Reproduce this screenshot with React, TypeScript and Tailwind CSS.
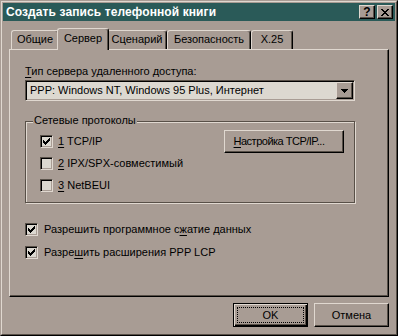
import React from 'react';

const CHECK = 'M0 2h1v3H0z M1 3h1v3H1z M2 4h1v3H2z M3 3h1v3H3z M4 2h1v3H4z M5 1h1v3H5z M6 0h1v3H6z';
const CLOSE =
  'M0 0h2v1H0z M6 0h2v1H6z M1 1h2v1H1z M5 1h2v1H5z M2 2h4v1H2z M3 3h2v1H3z M2 4h4v1H2z M1 5h2v1H1z M5 5h2v1H5z M0 6h2v1H0z M6 6h2v1H6z';
const ARROW = 'M0 0h7v1H0z M1 1h5v1H1z M2 2h3v1H2z M3 3h1v1H3z';

function Checkbox({ checked }: { checked?: boolean }) {
  return (
    <span className="flex w-[13px] h-[13px] shrink-0 items-center justify-center bg-[#dcd8d0] border border-t-[#585048] border-l-[#585048] border-r-[#e0d8d0] border-b-[#e0d8d0] shadow-[inset_1px_1px_0_#000,inset_-1px_-1px_0_#a89c94]">
      {checked ? (
        <svg width="7" height="7" viewBox="0 0 7 7" shapeRendering="crispEdges">
          <path d={CHECK} fill="#000" />
        </svg>
      ) : null}
    </span>
  );
}

function CheckRow({ checked, children, gap }: { checked?: boolean; children: React.ReactNode; gap: 'sm' | 'md' }) {
  return (
    <div className={gap === 'sm' ? 'flex items-center gap-[5px] h-[13px]' : 'flex items-center gap-[6px] h-[13px]'}>
      <Checkbox checked={checked} />
      <span className="leading-[13px] whitespace-nowrap">{children}</span>
    </div>
  );
}

function TitleBtn({ children }: { children: React.ReactNode }) {
  return (
    <div className="flex w-[16px] h-[14px] items-center justify-center bg-[#a89c94] border border-t-[#e0d8d0] border-l-[#e0d8d0] border-r-black border-b-black shadow-[inset_-1px_-1px_0_#585048]">
      {children}
    </div>
  );
}

function Tab({ label, selected, w }: { label: string; selected?: boolean; w: string }) {
  if (selected) {
    return (
      <div
        className={`relative z-10 -mx-[2px] mb-[-1px] h-[22px] bg-[#a89c94] border-t border-l border-r border-t-[#e0d8d0] border-l-[#e0d8d0] border-r-black shadow-[inset_-1px_0_0_#585048] rounded-t-[3px] flex justify-center pt-[3px] leading-[13px] ${w}`}
      >
        {label}
      </div>
    );
  }
  return (
    <div
      className={`h-[19px] bg-[#a89c94] border-t border-l border-r border-t-[#e0d8d0] border-l-[#e0d8d0] border-r-black shadow-[inset_-1px_0_0_#585048] rounded-t-[3px] flex justify-center pt-[2px] leading-[13px] ${w}`}
    >
      {label}
    </div>
  );
}

function Button({ children, isDefault, className }: { children: React.ReactNode; isDefault?: boolean; className: string }) {
  if (isDefault) {
    return (
      <div className={`flex border border-black bg-[#a89c94] shadow-[inset_1px_1px_0_#e0d8d0,inset_-1px_-1px_0_#000,inset_-2px_-2px_0_#585048] ${className}`}>
        <div className="m-[3px] flex flex-1 items-center justify-center border border-dotted border-black leading-[13px]">
          {children}
        </div>
      </div>
    );
  }
  return (
    <div
      className={`flex items-center justify-center bg-[#a89c94] border border-t-[#e0d8d0] border-l-[#e0d8d0] border-r-black border-b-black shadow-[inset_-1px_-1px_0_#585048] leading-[13px] ${className}`}
    >
      {children}
    </div>
  );
}

export default function App() {
  return (
    <div className="w-[398px] h-[336px] bg-[#a89c94] text-black text-[11px] font-['Liberation_Sans',Arial,sans-serif] border border-t-[#a89c94] border-l-[#a89c94] border-r-black border-b-black">
      <div className="w-full h-full border border-t-[#e0d8d0] border-l-[#e0d8d0] border-r-[#585048] border-b-[#585048] p-px flex flex-col">
        {/* Title bar */}
        <div className="h-[18px] shrink-0 flex items-center bg-[#2a5a58] pl-[3px] pr-[2px]">
          <span className="text-white font-bold text-[12px] leading-[18px] whitespace-nowrap tracking-[0.1px]">
            Создать запись телефонной книги
          </span>
          <div className="ml-auto flex gap-[2px]">
            <TitleBtn>
              <span className="font-bold text-[12px] leading-[12px] font-['Liberation_Sans',Arial,sans-serif]">?</span>
            </TitleBtn>
            <TitleBtn>
              <svg width="8" height="7" viewBox="0 0 8 7" shapeRendering="crispEdges">
                <path d={CLOSE} fill="#000" />
              </svg>
            </TitleBtn>
          </div>
        </div>

        {/* Body */}
        <div className="flex flex-col px-[6px]">
          {/* Tabs */}
          <div className="mt-[7px] h-[21px] flex items-end pl-[2px]">
            <Tab label="Общие" w="w-[48px]" />
            <Tab label="Сервер" w="w-[52px]" selected />
            <Tab label="Сценарий" w="w-[60px]" />
            <Tab label="Безопасность" w="w-[84px]" />
            <Tab label="X.25" w="w-[42px]" />
          </div>

          {/* Panel */}
          <div className="h-[248px] flex flex-col pl-[15px] pt-[15px] border border-t-[#e0d8d0] border-l-[#e0d8d0] border-r-black border-b-black shadow-[inset_-1px_-1px_0_#585048]">
            <div className="leading-[13px] whitespace-nowrap">
              <span className="underline underline-offset-[2px]">Т</span>ип сервера удаленного доступа:
            </div>

            <div className="mt-[2px] w-[330px] h-[21px] p-px flex items-center bg-[#dcd8d0] border border-t-[#585048] border-l-[#585048] border-r-[#e0d8d0] border-b-[#e0d8d0] shadow-[inset_1px_1px_0_#000,inset_-1px_-1px_0_#a89c94]">
              <span className="flex-1 pl-[3px] leading-[13px] whitespace-nowrap">PPP: Windows NT, Windows 95 Plus, Интернет</span>
              <div className="flex w-[17px] h-[17px] items-center justify-center bg-[#a89c94] border border-t-[#e0d8d0] border-l-[#e0d8d0] border-r-black border-b-black shadow-[inset_-1px_-1px_0_#585048]">
                <svg width="7" height="4" viewBox="0 0 7 4" shapeRendering="crispEdges">
                  <path d={ARROW} fill="#000" />
                </svg>
              </div>
            </div>

            {/* Group box */}
            <div className="relative mt-[20px] w-[330px] h-[82px] flex items-start pt-[8px] pl-[14px] pr-[10px] border border-[#585048] shadow-[inset_1px_1px_0_#e0d8d0,1px_1px_0_#e0d8d0]">
              <span className="absolute left-[7px] -top-[8px] px-[1px] bg-[#a89c94] leading-[13px] whitespace-nowrap">
                Сетевые протоколы
              </span>
              <div className="mt-[5px] flex flex-col gap-[9px]">
                <CheckRow checked gap="sm">
                  <span className="underline underline-offset-[2px]">1</span> TCP/IP
                </CheckRow>
                <CheckRow gap="sm">
                  <span className="underline underline-offset-[2px]">2</span> IPX/SPX-совместимый
                </CheckRow>
                <CheckRow gap="sm">
                  <span className="underline underline-offset-[2px]">3</span> NetBEUI
                </CheckRow>
              </div>
              <Button className="ml-auto w-[120px] h-[23px]">
                <span className="whitespace-nowrap tracking-[-0.5px] pr-[10px]">
                  <span className="underline underline-offset-[2px]">Н</span>астройка TCP/IP...
                </span>
              </Button>
            </div>

            <div className="mt-[20px] flex flex-col gap-[10px]">
              <CheckRow checked gap="md">
                Разрешить программное с<span className="underline underline-offset-[2px]">ж</span>атие данных
              </CheckRow>
              <CheckRow checked gap="md">
                Разре<span className="underline underline-offset-[2px]">ш</span>ить расширения PPP LCP
              </CheckRow>
            </div>
          </div>

          {/* Footer */}
          <div className="mt-[6px] flex justify-end gap-[6px]">
            <Button isDefault className="w-[75px] h-[24px]">
              OK
            </Button>
            <Button className="w-[75px] h-[24px]">Отмена</Button>
          </div>
        </div>
      </div>
    </div>
  );
}
